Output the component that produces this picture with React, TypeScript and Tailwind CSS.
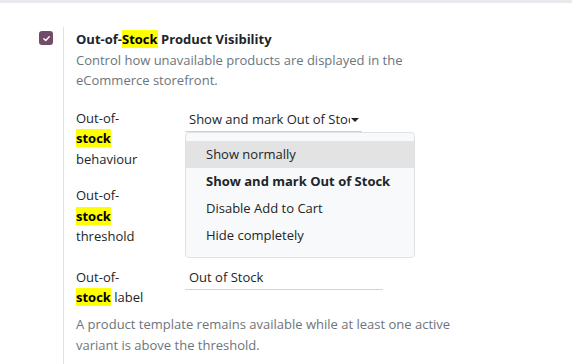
import React from "react";

const Hl = ({ children }: { children: React.ReactNode }) => (
  <span className="bg-[#ffff00] font-bold text-black">{children}</span>
);

export default function App() {
  return (
    <div
      className="w-[572px] h-[364px] bg-white overflow-hidden border-t-[3px] border-[#e7e9ed] text-[13px] leading-[20.5px] text-[#212529]"
      style={{ fontFamily: '"Open Sans", "Noto Sans", sans-serif' }}
    >
      <div className="flex pl-[39px] pt-[24px]">
        <div className="w-[24px] shrink-0 pt-[4px]">
          <div className="w-[14px] h-[14px] rounded-[3px] bg-[#714b67] flex items-center justify-center">
            <svg width="9" height="9" viewBox="0 0 10 10">
              <path d="M2 5.2 L4.2 7.2 L8 3" stroke="white" strokeWidth="1.6" fill="none" strokeLinecap="round" strokeLinejoin="round" />
            </svg>
          </div>
        </div>
        <div className="border-l border-[#dee2e6] pl-[12px] w-[403px] pb-[8px]">
          <div className="font-bold pt-[2px]">
            Out-of-<Hl>Stock</Hl> Product Visibility
          </div>
          <div className="text-[#6c757d]">
            Control how unavailable products are displayed in the eCommerce storefront.
          </div>

          <div className="flex mt-[17px]">
            <div className="w-[109px] shrink-0">
              Out-of-
              <br />
              <Hl>stock</Hl>
              <br />
              behaviour
            </div>
            <div className="relative">
              <div className="w-[177px] h-[24px] border-b border-[#ced4da] pl-[4px] flex items-center overflow-hidden whitespace-nowrap">
                <span className="overflow-hidden w-[161px]">Show and mark Out of Stock</span>
                <svg width="8" height="5" viewBox="0 0 8 5" className="ml-[1px] mt-[3px]">
                  <path d="M0 0 L8 0 L4 4 Z" fill="#212529" />
                </svg>
              </div>
              <div className="absolute left-0 top-[24px] w-[230px] bg-[#f8f9fa] border border-[#dee2e6] rounded-[4px] py-[8px] z-10 leading-[27px]">
                <div className="bg-[#e3e3e3] pl-[20px]">Show normally</div>
                <div className="pl-[20px] font-bold">Show and mark Out of Stock</div>
                <div className="pl-[20px]">Disable Add to Cart</div>
                <div className="pl-[20px]">Hide completely</div>
              </div>
            </div>
          </div>

          <div className="flex mt-[16px]">
            <div className="w-[109px] shrink-0">
              Out-of-
              <br />
              <Hl>stock</Hl>
              <br />
              threshold
            </div>
            <div className="w-[198px] h-[24px] border-b border-[#ced4da]" />
          </div>

          <div className="flex mt-[20px]">
            <div className="w-[109px] shrink-0">
              Out-of-
              <br />
              <Hl>stock</Hl> label
            </div>
            <div className="w-[198px] h-[23px] border-b border-[#ced4da] pl-[4px] flex items-center">
              Out of Stock
            </div>
          </div>

          <div className="text-[#6c757d] mt-[6px] leading-[21px]">
            A product template remains available while at least one active variant is above the threshold.
          </div>
        </div>
      </div>
    </div>
  );
}
